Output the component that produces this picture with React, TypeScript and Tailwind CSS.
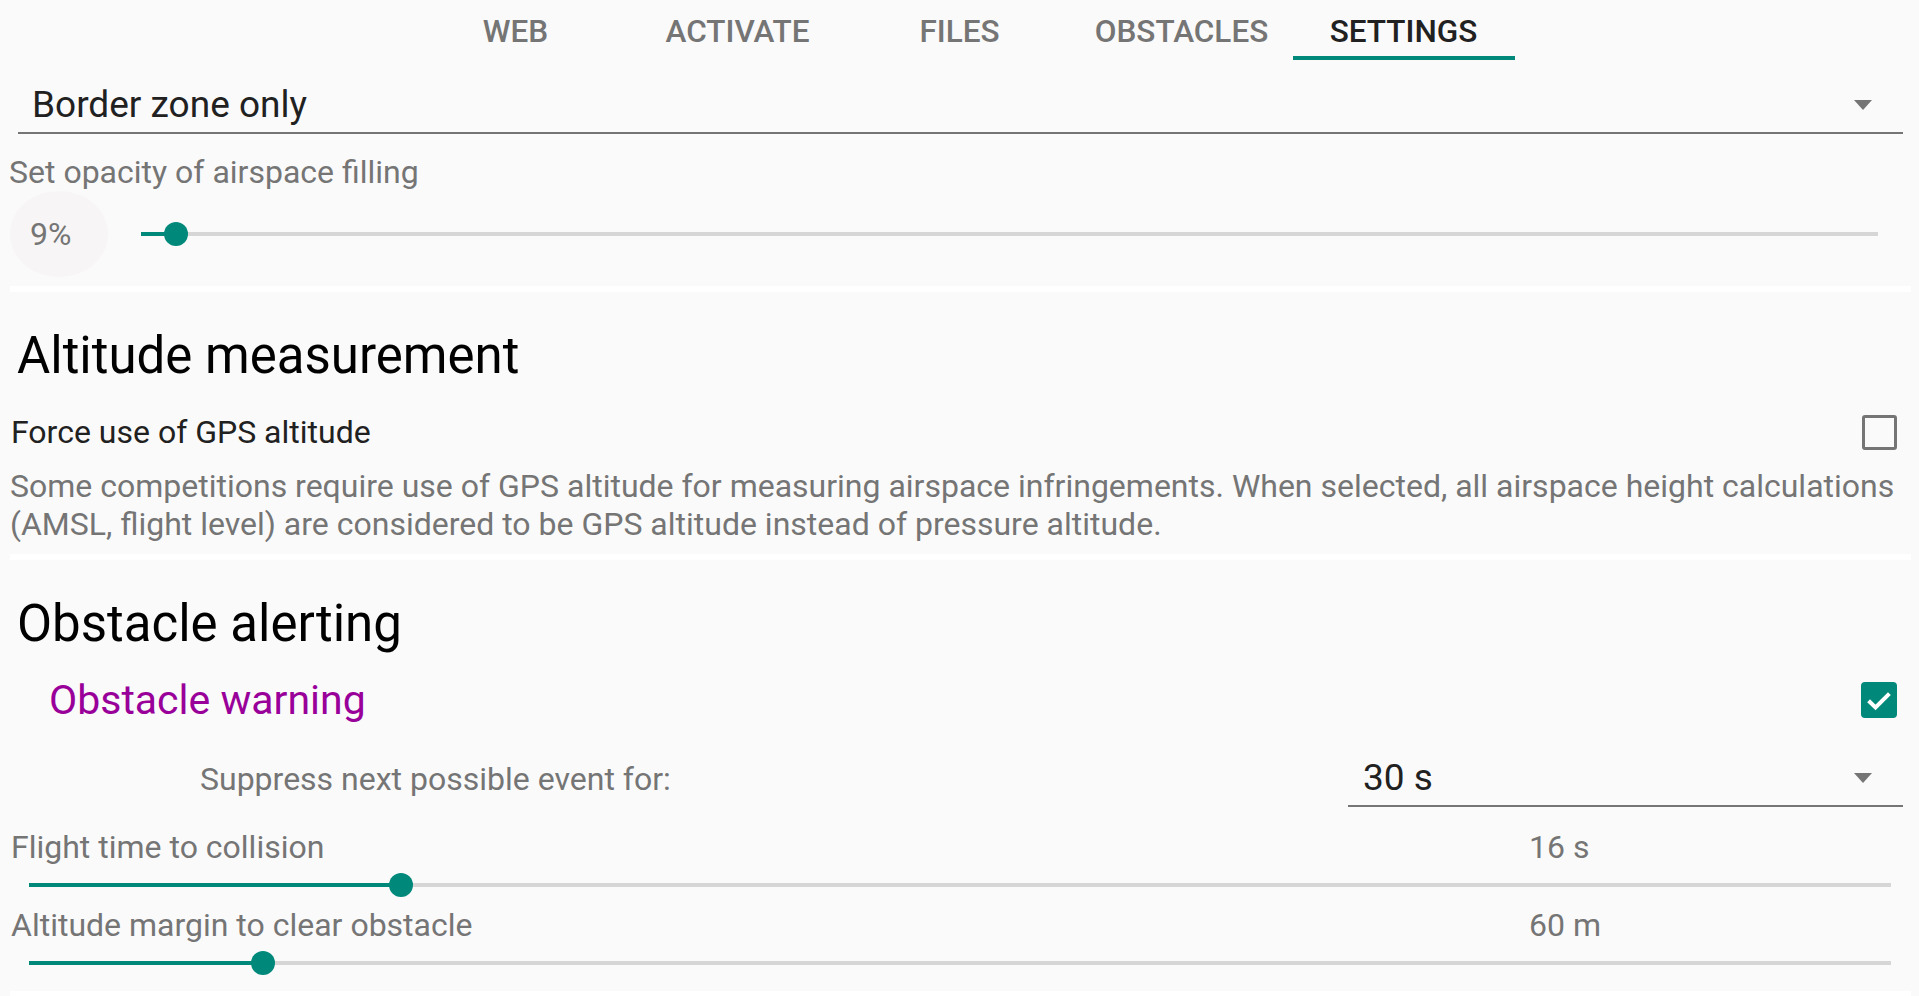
import React from 'react';

const TABS = ['WEB', 'ACTIVATE', 'FILES', 'OBSTACLES', 'SETTINGS'];

function Arrow() {
  return (
    <svg width="18" height="10" viewBox="0 0 18 10" className="mr-[31px] shrink-0">
      <polygon points="0,0 18,0 9,10" fill="#757575" />
    </svg>
  );
}

function Slider({ frac }: { frac: number }) {
  return (
    <div className="relative h-[4px] flex-1 bg-[#d6d6d6]">
      <div className="absolute left-0 top-0 h-[4px] bg-[#00897b]" style={{ width: `${frac * 100}%` }} />
      <div
        className="absolute top-1/2 h-[24px] w-[24px] -translate-x-1/2 -translate-y-1/2 rounded-full bg-[#00897b]"
        style={{ left: `${frac * 100}%` }}
      />
    </div>
  );
}

function Band({ mt }: { mt: string }) {
  return <div className={`${mt} ml-[10px] mr-[8px] h-[6px] bg-white`} />;
}

export default function App() {
  return (
    <div className="h-[996px] w-full overflow-hidden bg-[#fafafa] font-['Roboto',sans-serif]">
      {/* Tabs */}
      <div className="flex h-[60px] justify-center">
        {TABS.map((t) => {
          const active = t === 'SETTINGS';
          return (
            <div
              key={t}
              className={
                active
                  ? 'h-[60px] w-[222px] border-b-4 border-[#00897b] pt-[12px] text-center text-[31.5px] font-medium leading-[40px] text-[#212121]'
                  : 'h-[60px] w-[222px] border-b-4 border-transparent pt-[12px] text-center text-[31.5px] font-medium leading-[40px] text-[#757575]'
              }
            >
              {t}
            </div>
          );
        })}
      </div>

      {/* Section 1 */}
      <div className="ml-[18px] mr-[16px] flex items-center border-b-2 border-[#757575] pb-[3px] pt-[21px]">
        <span className="flex-1 pl-[14px] text-[37px] leading-[48px] text-[#212121]">Border zone only</span>
        <Arrow />
      </div>
      <div className="mt-[18px] pl-[9px] text-[32px] leading-[40px] text-[#757575]">Set opacity of airspace filling</div>
      <div className="flex h-[84px] items-center pl-[10px] pr-[41px]">
        <div className="flex h-[86px] w-[98px] shrink-0 items-center rounded-[50%] bg-[#f8f5f6] pl-[20px] text-[32px] leading-[40px] text-[#757575]">
          9%
        </div>
        <div className="ml-[33px] flex flex-1 items-center">
          <Slider frac={0.02} />
        </div>
      </div>
      <Band mt="mt-[10px]" />

      {/* Section 2 */}
      <div className="mt-[34px] pl-[17px] text-[51px] leading-[60px] text-black">Altitude measurement</div>
      <div className="mt-[26px] flex items-center pl-[11px] pr-[22px]">
        <span className="flex-1 text-[32px] leading-[40px] text-[#212121]">Force use of GPS altitude</span>
        <div className="h-[35px] w-[35px] rounded-[3px] border-[3px] border-[#757575]" />
      </div>
      <div className="mt-[15px] pl-[10px] pr-[8px] text-[32px] leading-[38px] text-[#757575]">
        Some competitions require use of GPS altitude for measuring airspace infringements. When selected, all airspace height
        calculations (AMSL, flight level) are considered to be GPS altitude instead of pressure altitude.
      </div>
      <Band mt="mt-[11px]" />

      {/* Section 3 */}
      <div className="mt-[34px] pl-[17px] text-[51px] leading-[60px] text-black">Obstacle alerting</div>
      <div className="mt-[22px] flex items-center pl-[49px] pr-[22px]">
        <span className="flex-1 text-[41px] leading-[48px] text-[#990099]">Obstacle warning</span>
        <div className="flex h-[36px] w-[36px] items-center justify-center rounded-[4px] bg-[#00897b]">
          <svg width="32" height="32" viewBox="0 0 24 24">
            <path d="M4.2 12.6 L9.4 17.6 L19.8 7.2" fill="none" stroke="#ffffff" strokeWidth="3" />
          </svg>
        </div>
      </div>
      <div className="flex items-baseline">
        <span className="flex-1 pl-[200px] text-[32px] leading-[40px] text-[#757575]">Suppress next possible event for:</span>
        <div className="mr-[16px] flex w-[555px] items-center border-b-2 border-[#757575] pb-[3px] pt-[30px]">
          <span className="flex-1 pl-[15px] text-[37px] leading-[48px] text-[#212121]">30 s</span>
          <Arrow />
        </div>
      </div>
      <div className="mt-[20px] flex pl-[11px] text-[32px] leading-[40px] text-[#757575]">
        <span className="w-[1518px]">Flight time to collision</span>
        <span>16 s</span>
      </div>
      <div className="flex h-[36px] items-center pl-[29px] pr-[28px]">
        <Slider frac={0.2} />
      </div>
      <div className="mt-[2px] flex pl-[11px] text-[32px] leading-[40px] text-[#757575]">
        <span className="w-[1518px]">Altitude margin to clear obstacle</span>
        <span>60 m</span>
      </div>
      <div className="flex h-[36px] items-center pl-[29px] pr-[28px]">
        <Slider frac={0.1257} />
      </div>
      <Band mt="mt-[10px]" />
    </div>
  );
}
